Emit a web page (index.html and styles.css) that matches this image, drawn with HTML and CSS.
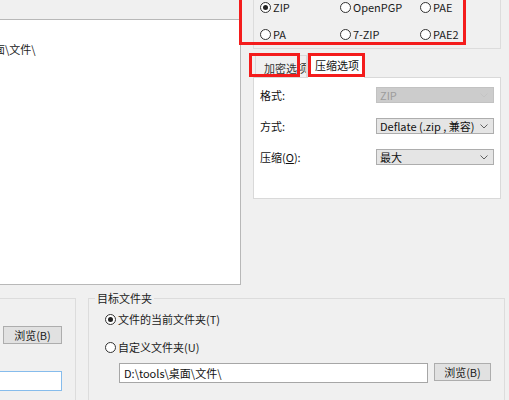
FILE: index.html
```html
<!DOCTYPE html>
<html lang="zh-CN">
<head>
<meta charset="utf-8">
<title>压缩选项</title>
<link rel="stylesheet" href="styles.css">
</head>
<body>
<div class="screen">
  <div class="top">
    <div class="left-col">
      <div class="list">
        <div class="list-item"><span class="scrolled">桌面\文件\</span></div>
      </div>
    </div>
    <div class="right-col">
      <div class="fmt-group">
        <div class="radio-grid">
          <label class="radio checked"><span class="dot"></span>ZIP</label>
          <label class="radio"><span class="dot"></span>OpenPGP</label>
          <label class="radio"><span class="dot"></span>PAE</label>
          <label class="radio"><span class="dot"></span>PA</label>
          <label class="radio"><span class="dot"></span>7-ZIP</label>
          <label class="radio"><span class="dot"></span>PAE2</label>
        </div>
      </div>
      <div class="mark mark-fmt"></div>
      <div class="tabs">
        <div class="tab">加密选项</div>
        <div class="tab active">压缩选项</div>
        <div class="mark mark-tab1"></div>
        <div class="mark mark-tab2"></div>
      </div>
      <div class="panel">
        <div class="row">
          <span class="lbl">格式:</span>
          <div class="select disabled"><span>ZIP</span><svg class="chev" width="8" height="5" viewBox="0 0 8 5"><path d="M0.5 0.5 L4 4 L7.5 0.5" fill="none" stroke="#c4c4c4" stroke-width="1"/></svg></div>
        </div>
        <div class="row">
          <span class="lbl">方式:</span>
          <div class="select"><span>Deflate (.zip , 兼容)</span><svg class="chev" width="8" height="5" viewBox="0 0 8 5"><path d="M0.5 0.5 L4 4 L7.5 0.5" fill="none" stroke="#606060" stroke-width="1"/></svg></div>
        </div>
        <div class="row">
          <span class="lbl">压缩(<u>O</u>):</span>
          <div class="select"><span>最大</span><svg class="chev" width="8" height="5" viewBox="0 0 8 5"><path d="M0.5 0.5 L4 4 L7.5 0.5" fill="none" stroke="#606060" stroke-width="1"/></svg></div>
        </div>
      </div>
    </div>
  </div>
  <div class="bottom">
    <fieldset class="src-group">
      <button class="btn" type="button">浏览(B)</button>
      <div class="input focus"></div>
    </fieldset>
    <fieldset class="dst-group">
      <legend>目标文件夹</legend>
      <label class="radio checked first"><span class="dot"></span>文件的当前文件夹(T)</label>
      <label class="radio second"><span class="dot"></span>自定义文件夹(U)</label>
      <div class="path-row">
        <div class="input">D:\tools\桌面\文件\</div>
        <button class="btn" type="button">浏览(B)</button>
      </div>
    </fieldset>
  </div>
</div>
</body>
</html>
```

FILE: styles.css
```css
* { box-sizing: border-box; }

html, body {
  margin: 0;
  padding: 0;
  background: #f0f0f0;
}

body {
  font-family: "Noto Sans CJK SC", "Noto Sans", sans-serif;
  font-size: 11px;
  line-height: 14px;
  color: #111;
}

.screen {
  width: 509px;
  height: 400px;
  overflow: hidden;
  background: #f0f0f0;
}

/* ---------- top area ---------- */
.top {
  display: flex;
  height: 285px;
}

.left-col {
  width: 241px;
  padding-top: 19px;
  flex: none;
}

.list {
  height: 266px;
  margin-left: -2px;
  background: #fff;
  border: 1px solid #b8b8b8;
  overflow: hidden;
}

.list-item {
  padding-top: 22px;
  white-space: nowrap;
  color: #222;
}

.scrolled {
  margin-left: -16px;
}

.right-col {
  width: 268px;
  flex: none;
  position: relative;
}

.fmt-group {
  margin-left: 12px;
  width: 248px;
  height: 49px;
  border: 1px solid #dcdcdc;
  border-top: none;
}

.radio-grid {
  display: grid;
  grid-template-columns: 80px 80px 80px;
  grid-template-rows: 14px 14px;
  row-gap: 13px;
  padding: 0 0 0 6px;
}

.radio {
  display: flex;
  align-items: center;
  gap: 2px;
  white-space: nowrap;
  color: #1a1a1a;
}

.dot {
  width: 11px;
  height: 11px;
  border: 1px solid #333;
  border-radius: 50%;
  background: #fff;
  flex: none;
  display: flex;
  align-items: center;
  justify-content: center;
}

.radio.checked .dot::after {
  content: "";
  width: 5px;
  height: 5px;
  border-radius: 50%;
  background: #222;
}

/* red annotation marks */
.mark {
  position: absolute;
  border: 3px solid #f41c1c;
  pointer-events: none;
}

.mark-fmt {
  left: -2px;
  top: -6px;
  width: 227px;
  height: 51px;
}

.tabs {
  position: relative;
  display: flex;
  align-items: flex-end;
  margin: 4px 0 0 12px;
  height: 24px;
}

.tab {
  height: 22px;
  padding: 5px 0 0 8px;
  width: 52px;
  margin-left: 2px;
  border: 1px solid #d9d9d9;
  border-bottom: none;
  background: #f0f0f0;
  color: #333;
  white-space: nowrap;
  overflow: hidden;
}

.tab.active {
  height: 24px;
  width: 58px;
  margin-left: 0;
  padding: 4px 0 0 7px;
  background: #fff;
  color: #111;
  position: relative;
  z-index: 1;
  margin-bottom: -1px;
  height: 25px;
}

.mark-tab1 {
  left: -4px;
  top: 0;
  width: 51px;
  height: 24px;
}

.mark-tab2 {
  left: 55px;
  top: 0;
  width: 57px;
  height: 24px;
  z-index: 2;
}

.panel {
  margin-left: 12px;
  width: 248px;
  height: 122px;
  background: #fff;
  border: 1px solid #d9d9d9;
  padding: 9px 6px 0 6px;
  display: flex;
  flex-direction: column;
  gap: 15px;
}

.row {
  display: flex;
  align-items: center;
  justify-content: space-between;
  height: 16px;
}

.lbl {
  color: #111;
}

.select {
  width: 118px;
  height: 16px;
  border: 1px solid #adadad;
  background: #e5e5e5;
  display: flex;
  align-items: center;
  justify-content: space-between;
  padding: 0 5px 0 3px;
  color: #111;
  white-space: nowrap;
}

.select.disabled {
  background: #cccccc;
  border-color: #c2c2c2;
  color: #9c9c9c;
}

.chev {
  display: block;
  flex: none;
}

/* ---------- bottom area ---------- */
.bottom {
  display: flex;
  align-items: flex-start;
  margin-top: 6px;
}

fieldset {
  margin: 0;
  padding: 0;
  min-width: 0;
  border: 1px solid #dcdcdc;
  height: 130px;
}

.src-group {
  margin-left: -20px;
  margin-top: 7px;
  width: 96px;
  display: flex;
  flex-direction: column;
  align-items: flex-end;
  padding: 27px 13px 0 0;
}

.btn {
  font: inherit;
  color: #222;
  width: 59px;
  height: 18px;
  padding: 0;
  background: #e1e1e1;
  border: 1px solid #adadad;
  border-radius: 0;
}

.input {
  height: 20px;
  background: #fff;
  border: 1px solid #a6a6a6;
  padding: 2px 4px;
  white-space: nowrap;
  color: #111;
}

.input.focus {
  width: 90px;
  margin-top: 27px;
  border-color: #86bcec;
}

.dst-group {
  margin-left: 12px;
  width: 417px;
  height: 140px;
  padding: 0 0 0 16px;
}

.dst-group legend {
  margin-left: -10px;
  padding: 0 2px;
  line-height: 14px;
  color: #222;
}

.dst-group .radio {
  height: 14px;
}

.dst-group .first {
  margin-top: 7px;
}

.dst-group .second {
  margin-top: 14px;
}

.path-row {
  display: flex;
  align-items: flex-start;
  gap: 6px;
  margin: 9px 0 0 14px;
}

.path-row .input {
  width: 309px;
}

.path-row .btn {
  width: 57px;
}
```
